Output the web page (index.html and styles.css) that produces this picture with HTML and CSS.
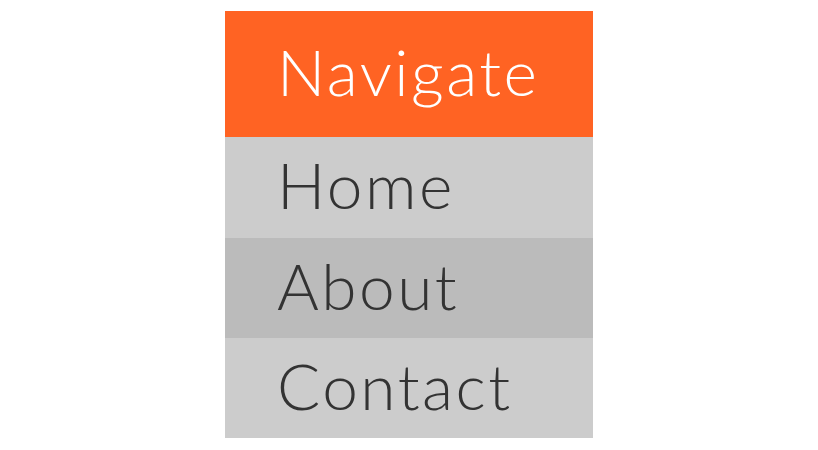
FILE: index.html
```html
<!DOCTYPE html>
<html>
<head>
<meta charset="utf-8">
<link rel="stylesheet" href="styles.css">
</head>
<body>
<nav class="menu">
  <div class="menu-title">Navigate</div>
  <a class="menu-item" href="#">Home</a>
  <a class="menu-item alt" href="#">About</a>
  <a class="menu-item" href="#">Contact</a>
</nav>
</body>
</html>
```
FILE: styles.css
```css
html, body {
  margin: 0;
  padding: 0;
  background: #ffffff;
}
body {
  padding-top: 11px;
}
.menu {
  width: 368px;
  margin: 0 auto;
  display: flex;
  flex-direction: column;
  font-family: Lato, "Open Sans", sans-serif;
  font-weight: 300;
  font-size: 64px;
  letter-spacing: 2.5px;
}
.menu-title {
  height: 126px;
  box-sizing: border-box;
  padding-bottom: 6px;
  background: #ff6323;
  color: #ffffff;
  display: flex;
  align-items: center;
  padding-left: 52px;
}
.menu-item {
  height: 100px;
  box-sizing: border-box;
  padding-bottom: 6px;
  background: #cccccc;
  color: #333333;
  text-decoration: none;
  display: flex;
  align-items: center;
  padding-left: 52px;
}
.menu-item:first-of-type {
  height: 101px;
}
.menu-item.alt {
  background: #bbbbbb;
}
```
